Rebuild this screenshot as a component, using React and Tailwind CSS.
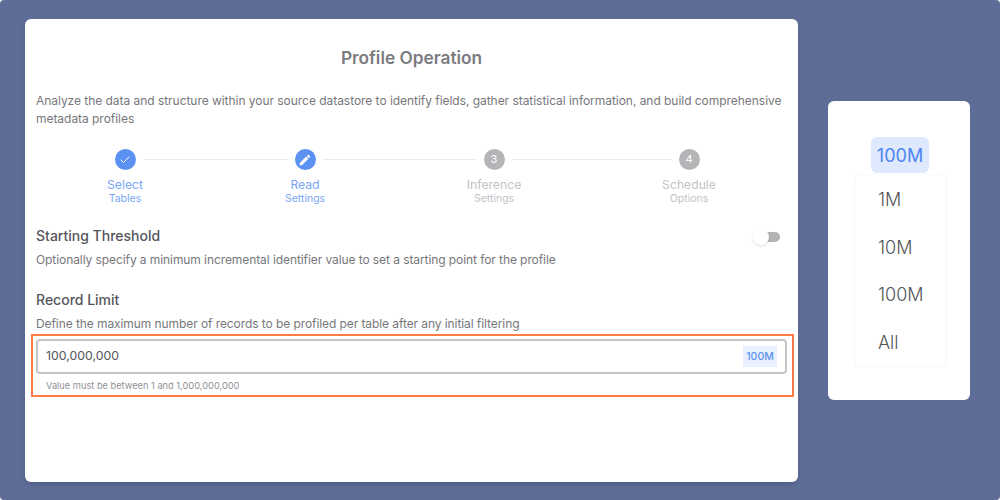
import { Check } from 'lucide-react';

const STEPS = [
  { title: 'Select', sub: 'Tables', done: true, icon: 'check', line: 'w-[144px]' },
  { title: 'Read', sub: 'Settings', done: true, icon: 'pencil', line: 'w-[153px]' },
  { title: 'Inference', sub: 'Settings', n: 3, line: 'w-[159px]' },
  { title: 'Schedule', sub: 'Options', n: 4 },
];

const OPTIONS = ['1M', '10M', '100M', 'All'];

function Step({ step }) {
  const tone = step.done ? 'text-[#79a6f6]' : 'text-[#c3c3c6]';
  return (
    <div className="flex w-9 flex-col items-center">
      <div
        className={`flex h-[21px] w-[21px] items-center justify-center rounded-full text-[11px] text-white ${
          step.done ? 'bg-[#5b92f2]' : 'bg-[#b5b5b7]'
        }`}
      >
        {step.icon === 'check' && <Check className="h-3 w-3" strokeWidth={2} />}
        {step.icon === 'pencil' && (
          <svg viewBox="0 0 24 24" className="h-[14px] w-[14px] fill-white">
            <path d="M3 17.25V21h3.75L17.81 9.94l-3.75-3.75L3 17.25zM20.71 7.04c.39-.39.39-1.02 0-1.41l-2.34-2.34c-.39-.39-1.02-.39-1.41 0l-1.83 1.83 3.75 3.75 1.83-1.83z" />
          </svg>
        )}
        {step.n}
      </div>
      <div className={`mt-[7px] whitespace-nowrap text-[12.2px] leading-[15px] ${tone}`}>{step.title}</div>
      <div className={`whitespace-nowrap text-[10.5px] leading-[13px] ${tone}`}>{step.sub}</div>
    </div>
  );
}

export default function App() {
  return (
    <div className="flex h-[500px] w-[1000px] items-start rounded-[4px] bg-[#5e6d98] pl-[25px] pt-[19px] font-['Inter',sans-serif] text-[#77777b]">
      {/* Main card */}
      <div className="h-[463px] w-[773px] rounded-md bg-white px-[11px] shadow-md">
        <h1 className="mt-[28px] text-center text-[17.3px] font-semibold leading-[22px] text-[#7b7b80]">
          Profile Operation
        </h1>
        <p className="mt-[23px] text-[12px] leading-[18px] tracking-[-0.04px]">
          Analyze the data and structure within your source datastore to identify fields, gather statistical information, and build comprehensive metadata profiles
        </p>

        {/* Stepper */}
        <div className="ml-[71px] mt-[21px] flex items-start">
          {STEPS.map((step) => (
            <div key={step.title} className="flex items-start">
              <Step step={step} />
              {step.line && <div className={`mt-[10px] h-px bg-[#eaeaec] ${step.line}`} />}
            </div>
          ))}
        </div>

        {/* Starting threshold */}
        <div className="mt-[21px] flex items-start justify-between">
          <div>
            <h2 className="text-[14px] font-medium leading-[20px] text-[#55555a]">Starting Threshold</h2>
            <p className="mt-[5px] text-[12px] leading-[18px] tracking-[-0.08px]">
              Optionally specify a minimum incremental identifier value to set a starting point for the profile
            </p>
          </div>
          <div className="relative mr-[7px] mt-[6px] h-[10px] w-[19px] rounded-full bg-[#b3b3b5]">
            <div className="absolute -left-[8px] -top-[3px] h-4 w-4 rounded-full bg-white shadow" />
          </div>
        </div>

        {/* Record limit */}
        <h2 className="mt-[21px] text-[14px] font-medium leading-[20px] text-[#55555a]">Record Limit</h2>
        <p className="mt-[5px] text-[12px] leading-[18px] tracking-[-0.08px]">
          Define the maximum number of records to be profiled per table after any initial filtering
        </p>
        <div className="-mx-[5px] mt-px h-[63px] w-[763px] border-2 border-[#ff7a45] px-[3px] pt-[3px]">
          <div className="flex h-[35px] w-[751px] items-center justify-between rounded border-2 border-[#c6c6c8] pl-[8px] pr-[8px]">
            <span className="text-[12.3px] text-[#55555a]">100,000,000</span>
            <span className="flex h-[21px] w-[34px] items-center justify-center bg-[#e8effe] text-[10.5px] font-medium text-[#5b92f2]">
              100M
            </span>
          </div>
          <p className="ml-[10px] mt-[5px] text-[9.25px] leading-[14px] text-[#909094]">
            Value must be between 1 and 1,000,000,000
          </p>
        </div>
      </div>

      {/* Record limit dropdown */}
      <div className="ml-[30px] mt-[82px] flex h-[299px] w-[142px] flex-col items-start rounded-md bg-white pl-[26px] pt-[36px]">
        <div className="ml-[17px] flex h-9 w-[58px] items-center justify-center rounded-md bg-[#dfe9fd] text-[18px] text-[#4a86f0]">
          100M
        </div>
        <div className="mt-px flex h-[193px] w-[93px] flex-col rounded border border-[#f6f6fb] pl-[23px] pt-px">
          {OPTIONS.map((opt) => (
            <div key={opt} className="flex h-12 items-center text-[18px] font-light text-[#555559]">
              {opt}
            </div>
          ))}
        </div>
      </div>
    </div>
  );
}
